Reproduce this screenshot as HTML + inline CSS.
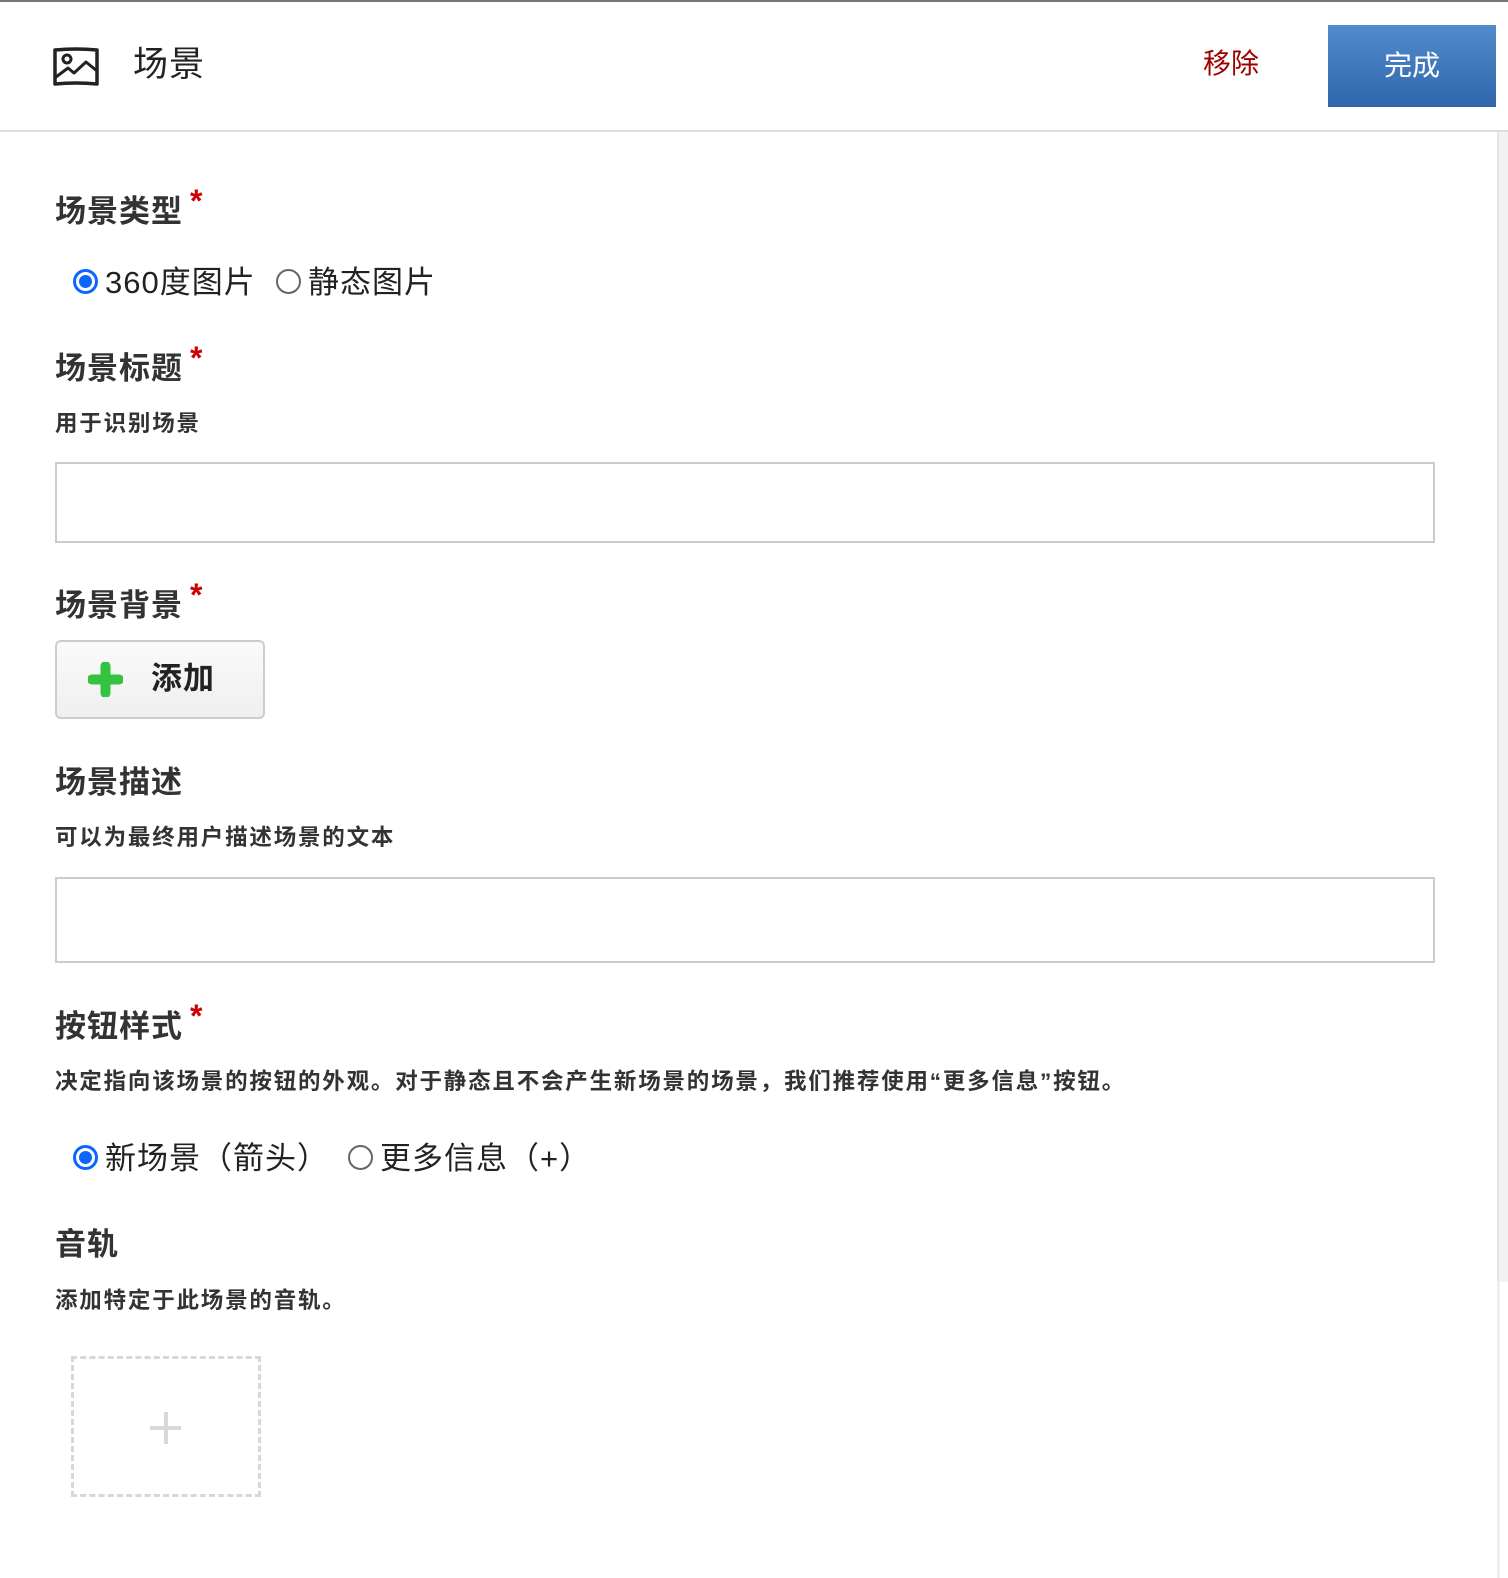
<!DOCTYPE html>
<html><head><meta charset="utf-8"><style>
*{margin:0;padding:0;box-sizing:border-box}
body{width:1508px;height:1578px;background:#fff;position:relative;overflow:hidden;font-family:"Liberation Sans","Noto Sans CJK SC",sans-serif;color:#222}
.a{position:absolute;white-space:nowrap}
.lab{font-size:31px;font-weight:bold;color:#333;line-height:1;letter-spacing:1px}
.lab i{color:#c00;font-style:normal;font-size:32px;margin-left:7px;position:relative;top:-10px}
.desc{font-size:22.5px;font-weight:bold;color:#333;line-height:1;letter-spacing:1.8px}
.inp{position:absolute;left:55px;width:1380px;border:2px solid #ccc;background:#fff}
.rad{position:absolute;width:25px;height:25px;border-radius:50%}
.on{border:3px solid #0a66ff;background:#fff}
.on::after{content:"";position:absolute;left:3px;top:3px;width:13px;height:13px;border-radius:50%;background:#0a66ff}
.off{border:2px solid #666}
.rt{font-size:31px;color:#222;line-height:1;letter-spacing:1px}
</style></head><body>
<div class="a" style="left:0;top:0;width:1508px;height:2px;background:#777"></div>
<svg class="a" style="left:52px;top:47px" width="48" height="40" viewBox="0 0 48 40"><path d="M3 3 Q24 1 45 3 L45 37 Q24 35 3 37 Z" fill="none" stroke="#222" stroke-width="3.5" stroke-linejoin="round"/><circle cx="15" cy="12" r="4" fill="none" stroke="#222" stroke-width="3"/><path d="M4 30 L16 21 L22 26 L34 15 L45 24" fill="none" stroke="#222" stroke-width="3" stroke-linejoin="round"/></svg>
<div class="a" style="left:133px;top:47px;font-size:35px;line-height:1;color:#222;letter-spacing:1px">场景</div>
<div class="a" style="left:1203px;top:50px;font-size:28px;line-height:1;color:#a00000">移除</div>
<div class="a" style="left:1328px;top:25px;width:168px;height:82px;background:linear-gradient(#518ccd,#3066ac);color:#fff;font-size:28px;line-height:82px;text-align:center">完成</div>
<div class="a" style="left:0;top:130px;width:1508px;height:2px;background:#ddd"></div>
<div class="a" style="left:1497px;top:132px;width:11px;height:1150px;background:#f2f2f2;border-left:2px solid #e4e4e4"></div>
<div class="a" style="left:1497px;top:1282px;width:3px;height:296px;background:#eee"></div>

<div class="a lab" style="left:55px;top:195px">场景类型<i>*</i></div>
<div class="rad on" style="left:73px;top:269px"></div>
<div class="a rt" style="left:105px;top:267px">360度图片</div>
<div class="rad off" style="left:276px;top:269px"></div>
<div class="a rt" style="left:308px;top:267px">静态图片</div>

<div class="a lab" style="left:55px;top:352px">场景标题<i>*</i></div>
<div class="a desc" style="left:55px;top:413px">用于识别场景</div>
<div class="inp" style="top:462px;height:81px"></div>

<div class="a lab" style="left:55px;top:589px">场景背景<i>*</i></div>
<div class="a" style="left:55px;top:640px;width:210px;height:79px;border:2px solid #ccc;border-radius:6px;background:linear-gradient(#fafafa,#efefef)"></div>
<svg class="a" style="left:88px;top:662px" width="35" height="35" viewBox="0 0 35 35"><path d="M17.5 4V31M4 17.5H31" stroke="#33c33f" stroke-width="10" stroke-linecap="round"/></svg>
<div class="a" style="left:151px;top:663px;font-size:31px;font-weight:bold;color:#222;line-height:1;letter-spacing:1px">添加</div>

<div class="a lab" style="left:55px;top:767px">场景描述</div>
<div class="a desc" style="left:55px;top:827px">可以为最终用户描述场景的文本</div>
<div class="inp" style="top:877px;height:86px"></div>

<div class="a lab" style="left:55px;top:1010px">按钮样式<i>*</i></div>
<div class="a desc" style="left:55px;top:1071px">决定指向该场景的按钮的外观。对于静态且不会产生新场景的场景，我们推荐使用“更多信息”按钮。</div>
<div class="rad on" style="left:73px;top:1145px"></div>
<div class="a rt" style="left:105px;top:1143px">新场景（箭头）</div>
<div class="rad off" style="left:348px;top:1145px"></div>
<div class="a rt" style="left:380px;top:1143px">更多信息（+）</div>

<div class="a lab" style="left:55px;top:1229px">音轨</div>
<div class="a desc" style="left:55px;top:1290px">添加特定于此场景的音轨。</div>
<div class="a" style="left:71px;top:1356px;width:190px;height:141px;border:3px dashed #d8d8d8"></div>
<div class="a" style="left:150px;top:1426px;width:31px;height:4px;background:#d8d8d8"></div>
<div class="a" style="left:164px;top:1412px;width:4px;height:32px;background:#d8d8d8"></div>
</body></html>
